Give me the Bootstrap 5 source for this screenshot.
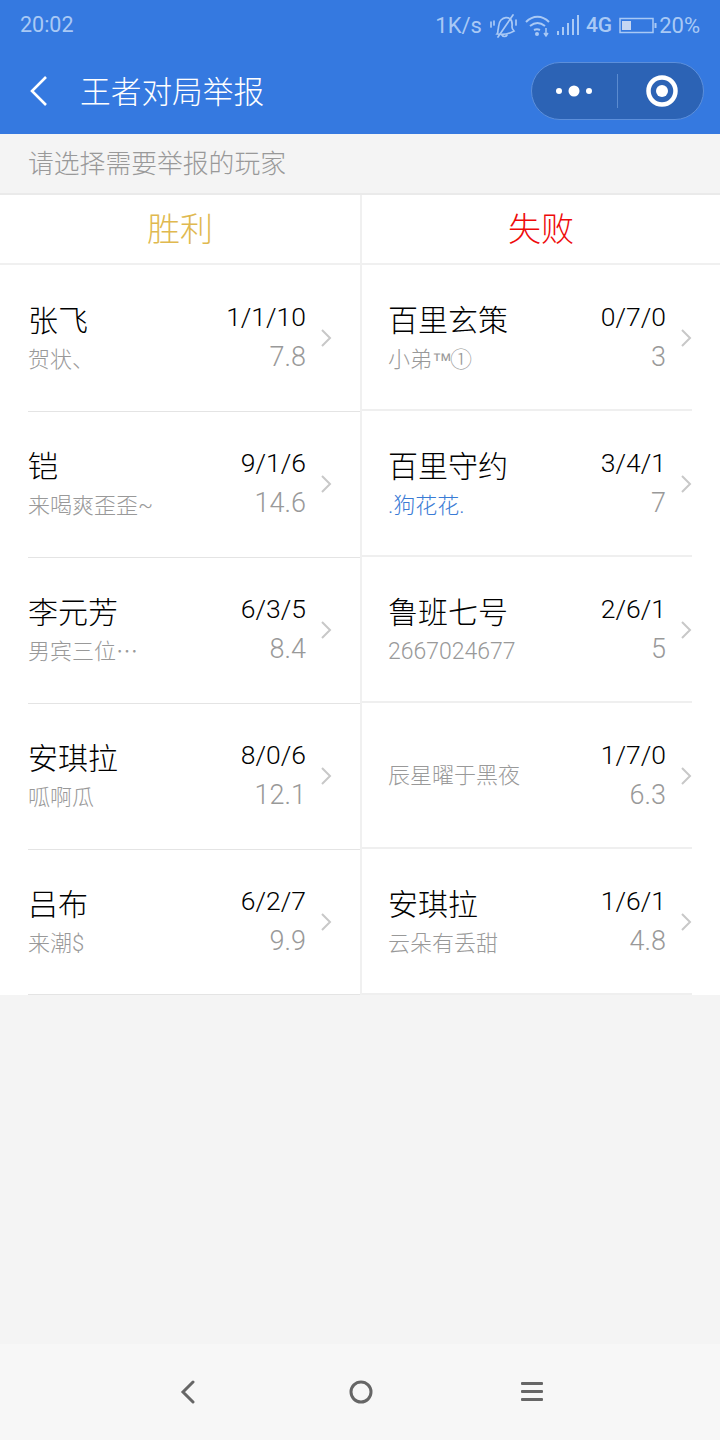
<!DOCTYPE html>
<html lang="zh">
<head>
  <meta charset="UTF-8" />
  <meta name="viewport" content="width=device-width, initial-scale=1" />
  <title>王者对局举报</title>
  <link href="https://cdn.jsdelivr.net/npm/bootstrap@5.3.3/dist/css/bootstrap.min.css" rel="stylesheet" />
  <style>
    body {
      background-color: #f4f4f4;
      font-family: Roboto, "Noto Sans CJK SC", sans-serif;
      height: 1440px;
      overflow: hidden;
    }

    .top-area { background-color: #3579e0; height: 134px; }

    .status-row {
      height: 50px;
      padding: 1px 20px 0 20px;
      color: #a9c9f5;
      font-size: 22px;
    }
    .st-time { font-size: 21.5px; }
    .st-bell { margin-left: 8px; }
    .st-wifi { margin-left: 8px; }
    .st-signal { margin-left: 7px; }
    .st-net { font-size: 21px; font-weight: 500; margin-left: 7px; }
    .st-batt { margin-left: 7px; }
    .st-perc { margin-left: 2px; }

    .title-row { height: 84px; padding: 0 16px 2px 29px; color: #fff; }
    .page-title { font-size: 30.7px; margin-left: 32px; font-weight: 300; position: relative; top: 2px; }

    .capsule {
      width: 173px;
      height: 58px;
      border-radius: 29px;
      background-color: #2c63b5;
      border: 1px solid #5c8fdb;
    }
    .capsule-part { width: 86px; height: 100%; }
    .capsule-record { padding-left: 3px; }
    .capsule-line { width: 1px; height: 34px; background-color: #5b8bd0; }

    .hint-row {
      height: 61px;
      padding: 2px 0 0 28px;
      color: #999;
      font-size: 25.8px;
      font-weight: 300;
      border-bottom: 2px solid #eaeaea;
    }

    .teams { background-color: #fff; height: 800px; }
    .team-left { width: 362px; border-right: 2px solid #f0f0f0; }
    .team-right { flex: 1; }

    .team-head {
      height: 70px;
      padding-top: 2px;
      font-size: 33px;
      font-weight: 300;
      border-bottom: 2px solid #f0f0f0;
    }
    .win { color: #e0b94f; }
    .lose { color: #ee0a0a; }

    .player-row {
      height: 146px;
      position: relative;
    }
    .team-left .player-row { padding: 0 54px 0 28px; }
    .team-right .player-row { padding: 0 26px 0 26px; margin-right: 28px; }
    .player-row::after {
      content: "";
      position: absolute;
      right: 0;
      height: 1px;
      background-color: #e4e4e4;
    }
    .team-left .player-row::after { left: 28px; bottom: -1px; }
    .team-left .player-row:last-child::after { bottom: 0; }
    .team-right .player-row::after { left: 0; bottom: 0; height: 2px; background-color: #efefef; }

    .hero-name { font-size: 30px; line-height: 38px; padding-top: 1px; color: #000; font-weight: 300; }
    .nick { font-size: 22px; line-height: 30px; margin-top: 5px; color: #999; font-weight: 300; }
    .nick-solo { margin-top: 0; }
    .nick-blue { color: #3a7bd5; }
    .nick-num { font-size: 23px; }
    .tm-mark { font-family: "Liberation Sans", sans-serif; font-size: 20px; letter-spacing: -2px; }
    .kda { font-size: 26.5px; line-height: 38px; margin-top: -3px; margin-bottom: 2px; color: #000; font-weight: 300; }
    .score { font-size: 27px; line-height: 38px; color: #999; font-weight: 300; }
    .row-arrow { position: absolute; right: 28px; top: 63px; }
    .team-right .row-arrow { right: 0; }

    .bottom-nav {
      position: absolute;
      left: 0;
      right: 0;
      bottom: 0;
      height: 96px;
      background-color: #f7f7f7;
    }
    .nav-slot { width: 172px; }
    .nav-home { padding-left: 2px; }
  </style>
</head>
<body>

  <div class="top-area">
    <div class="status-row d-flex align-items-center justify-content-between">
      <span class="st-time">20:02</span>
      <div class="d-flex align-items-center">
        <span>1K/s</span>
        <svg class="st-bell" width="27" height="27" viewBox="0 0 27 27" fill="none" stroke="#a9c9f5" stroke-width="1.700" stroke-linecap="round"><path d="M8 18c1-3 0-7 3-10 3-3 7-3 9-1 3 2 2 6 2 8 0 2 1 3 2 4-5 3-11 4-17 3 1-1 1-3 1-4z"/><path d="M12 23c1 2 4 2 5 0M8 25 23 3M1 10v5M26 8v5M4 9v4"/></svg>
        <svg class="st-wifi" width="25" height="26" viewBox="0 0 25 26" fill="none" stroke="#a9c9f5" stroke-width="2"><path d="M1 9c7-7 16-7 23 0M5 13c5-4 10-4 15 0M9 17c2-1 4-1 6 0"/><circle cx="12" cy="21" r="2" fill="#a9c9f5" stroke="none"/><path d="M21 15v8M19 20l2 3 2-3" stroke-width="1.500"/></svg>
        <svg class="st-signal" width="22" height="22" viewBox="0 0 22 22" fill="#a9c9f5"><rect x="0" y="16" width="2" height="4"/><rect x="5" y="12" width="2" height="8"/><rect x="10" y="8" width="2" height="12"/><rect x="15" y="4" width="2" height="16"/><rect x="20" y="0" width="2" height="20"/></svg>
        <span class="st-net">4G</span>
        <svg class="st-batt" width="38" height="18" viewBox="0 0 38 18" fill="none"><rect x="1" y="1.500" width="33" height="14" stroke="#a9c9f5" stroke-width="1.500"/><rect x="3" y="4" width="9" height="9" fill="#c5d6f2"/><rect x="35.500" y="6" width="2" height="5" fill="#a9c9f5"/></svg>
        <span class="st-perc">20%</span>
      </div>
    </div>
    <div class="title-row d-flex align-items-center justify-content-between">
      <div class="d-flex align-items-center">
        <svg width="19" height="32" viewBox="0 0 19 32" fill="none" stroke="#fff" stroke-width="2.600"><path d="M17 2 3 16l14 14"/></svg>
        <span class="page-title">王者对局举报</span>
      </div>
      <div class="capsule d-flex align-items-center">
        <div class="capsule-part d-flex align-items-center justify-content-center">
          <svg width="36" height="14" viewBox="0 0 36 14" fill="#fff"><circle cx="3" cy="7" r="3"/><circle cx="18" cy="7" r="5.500"/><circle cx="33" cy="7" r="3"/></svg>
        </div>
        <div class="capsule-line"></div>
        <div class="capsule-part capsule-record d-flex align-items-center justify-content-center">
          <svg width="32" height="32" viewBox="0 0 32 32"><circle cx="16" cy="16" r="13.500" fill="none" stroke="#fff" stroke-width="4.500"/><circle cx="16" cy="16" r="6" fill="#fff"/></svg>
        </div>
      </div>
    </div>
  </div>

  <div class="hint-row d-flex align-items-center">请选择需要举报的玩家</div>

  <div class="teams d-flex">
    <div class="team-left" id="teamLeft">
      <div class="team-head win d-flex align-items-center justify-content-center">胜利</div>
    </div>
    <div class="team-right" id="teamRight">
      <div class="team-head lose d-flex align-items-center justify-content-center">失败</div>
    </div>
  </div>

  <div class="bottom-nav d-flex align-items-center justify-content-center">
    <div class="nav-slot d-flex justify-content-center">
      <svg width="16" height="24" viewBox="0 0 16 24" fill="none" stroke="#666" stroke-width="3" stroke-linecap="round"><path d="M13 2 3 12l10 10"/></svg>
    </div>
    <div class="nav-slot nav-home d-flex justify-content-center">
      <svg width="24" height="24" viewBox="0 0 24 24" fill="none" stroke="#666" stroke-width="3"><circle cx="12" cy="12" r="10"/></svg>
    </div>
    <div class="nav-slot d-flex justify-content-center">
      <svg width="22" height="20" viewBox="0 0 22 20" fill="#666"><rect y="0" width="22" height="3" rx="1"/><rect y="8" width="22" height="3" rx="1"/><rect y="16" width="22" height="3" rx="1"/></svg>
    </div>
  </div>

  <script>
    const vincitori = [
      { eroe: "张飞", nick: "贺状、", kda: "1/1/10", voto: "7.8" },
      { eroe: "铠", nick: "来喝爽歪歪~", kda: "9/1/6", voto: "14.6" },
      { eroe: "李元芳", nick: "男宾三位⋯", kda: "6/3/5", voto: "8.4" },
      { eroe: "安琪拉", nick: "呱啊瓜", kda: "8/0/6", voto: "12.1" },
      { eroe: "吕布", nick: "来潮$", kda: "6/2/7", voto: "9.9" }
    ];
    const sconfitti = [
      { eroe: "百里玄策", nick: '小弟<span class="tm-mark">™</span>①', kda: "0/7/0", voto: "3" },
      { eroe: "百里守约", nick: ".狗花花.", kda: "3/4/1", voto: "7", classe: "nick-blue" },
      { eroe: "鲁班七号", nick: "2667024677", kda: "2/6/1", voto: "5", classe: "nick-num" },
      { eroe: "", nick: "辰星曜于黑夜", kda: "1/7/0", voto: "6.3", classe: "nick-solo" },
      { eroe: "安琪拉", nick: "云朵有丢甜", kda: "1/6/1", voto: "4.8" }
    ];

    function riga(p) {
      const nome = p.eroe ? `<div class="hero-name">${p.eroe}</div>` : "";
      return `
        <div class="player-row d-flex align-items-center justify-content-between">
          <div>
            ${nome}
            <div class="nick ${p.classe || ""}">${p.nick}</div>
          </div>
          <div class="text-end">
            <div class="kda">${p.kda}</div>
            <div class="score">${p.voto}</div>
          </div>
          <svg class="row-arrow" width="12" height="20" viewBox="0 0 12 20" fill="none" stroke="#c8c8c8" stroke-width="2"><path d="M2 2l8 8-8 8"/></svg>
        </div>`;
    }

    document.getElementById("teamLeft").insertAdjacentHTML("beforeend", vincitori.map(riga).join(""));
    document.getElementById("teamRight").insertAdjacentHTML("beforeend", sconfitti.map(riga).join(""));
  </script>
  <script src="https://cdn.jsdelivr.net/npm/bootstrap@5.3.3/dist/js/bootstrap.bundle.min.js"></script>
</body>
</html>
